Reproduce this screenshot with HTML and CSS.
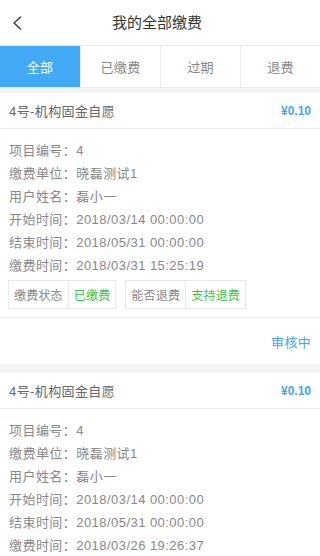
FILE: index.html
```html
<!DOCTYPE html>
<html lang="zh-CN">
<head>
<meta charset="utf-8">
<link rel="stylesheet" href="styles.css">
</head>
<body>
<div class="page">
  <header class="topbar">
    <div class="back">
      <svg width="10" height="14" viewBox="0 0 10 14"><path d="M8.5 1 L2 7 L8.5 13" fill="none" stroke="#444" stroke-width="1.6" stroke-linecap="round" stroke-linejoin="round"/></svg>
    </div>
    <div class="title">我的全部缴费</div>
    <div class="spacer"></div>
  </header>
  <nav class="tabs">
    <div class="tab active">全部</div>
    <div class="tab">已缴费</div>
    <div class="tab">过期</div>
    <div class="tab">退费</div>
  </nav>
  <div class="list">
    <section class="card">
      <div class="card-head"><span class="name">4号-机构固金自愿</span><span class="price">¥0.10</span></div>
      <div class="card-body">
        <div class="row">项目编号：4</div>
        <div class="row">缴费单位：晓磊测试1</div>
        <div class="row">用户姓名：磊小一</div>
        <div class="row">开始时间：2018/03/14 00:00:00</div>
        <div class="row">结束时间：2018/05/31 00:00:00</div>
        <div class="row">缴费时间：2018/03/31 15:25:19</div>
        <div class="badges">
          <div class="badge"><span class="b-label">缴费状态</span><span class="b-val">已缴费</span></div>
          <div class="badge"><span class="b-label">能否退费</span><span class="b-val">支持退费</span></div>
        </div>
      </div>
      <div class="card-foot">审核中</div>
    </section>
    <section class="card">
      <div class="card-head"><span class="name">4号-机构固金自愿</span><span class="price">¥0.10</span></div>
      <div class="card-body">
        <div class="row">项目编号：4</div>
        <div class="row">缴费单位：晓磊测试1</div>
        <div class="row">用户姓名：磊小一</div>
        <div class="row">开始时间：2018/03/14 00:00:00</div>
        <div class="row">结束时间：2018/05/31 00:00:00</div>
        <div class="row">缴费时间：2018/03/26 19:26:37</div>
      </div>
    </section>
  </div>
</div>
</body>
</html>
```
FILE: styles.css
```css
* { box-sizing: border-box; margin: 0; padding: 0; }
html, body { width: 320px; height: 556px; overflow: hidden; }
body {
  font-family: "Liberation Sans", "Noto Sans CJK SC", sans-serif;
  background: #f4f4f4;
  color: #888;
}
.page { width: 320px; }
.topbar {
  height: 46px;
  background: #fff;
  display: flex;
  align-items: center;
  border-bottom: 1px solid #e6e6e6;
}
.back {
  width: 34px;
  display: flex;
  justify-content: flex-start;
  padding-left: 12px;
  padding-top: 1px;
}
.back svg { display: block; }
.title {
  flex: 1;
  text-align: center;
  font-size: 15px;
  line-height: 20px;
  color: #333;
}
.spacer { width: 40px; }
.tabs {
  display: grid;
  grid-template-columns: repeat(4, 1fr);
  height: 42px;
  background: #fff;
  border-bottom: 1px solid #ececec;
}
.tab {
  display: flex;
  align-items: center;
  justify-content: center;
  font-size: 13px;
  color: #888;
  border-left: 1px solid #ececec;
  letter-spacing: 0.3px;
}
.tab:first-child { border-left: none; }
.tab.active { background: #42a9f4; color: #fff; }
.list {
  padding-top: 5px;
  display: flex;
  flex-direction: column;
  gap: 9px;
}
.card { background: #fff; }
.card-head {
  height: 36px;
  display: flex;
  align-items: center;
  justify-content: space-between;
  padding: 0 9px;
  border-bottom: 1px solid #ececec;
}
.name { font-size: 13px; color: #666; letter-spacing: 0.4px; }
.price { font-size: 12px; color: #3ea7f2; font-weight: bold; }
.card-body { padding: 10px 9px 8px; border-bottom: 1px solid #ececec; }
.row {
  font-size: 13px;
  line-height: 23px;
  letter-spacing: 0.45px;
  color: #888;
}
.badges {
  display: flex;
  gap: 9px;
  margin-top: 3px;
  margin-left: -1px;
}
.badge {
  display: flex;
  height: 29px;
  border: 1px solid #e8e8e8;
  font-size: 12px;
}
.badge span {
  display: flex;
  align-items: center;
  padding: 0 5px;
  letter-spacing: 0.2px;
}
.b-label { color: #888; border-right: 1px solid #e8e8e8; }
.b-val { color: #36c64a; }
.card-foot {
  height: 46px;
  display: flex;
  align-items: center;
  justify-content: flex-end;
  padding: 0 9px;
  font-size: 13px;
  color: #3ea7f2;
  letter-spacing: 0.3px;
}
```
